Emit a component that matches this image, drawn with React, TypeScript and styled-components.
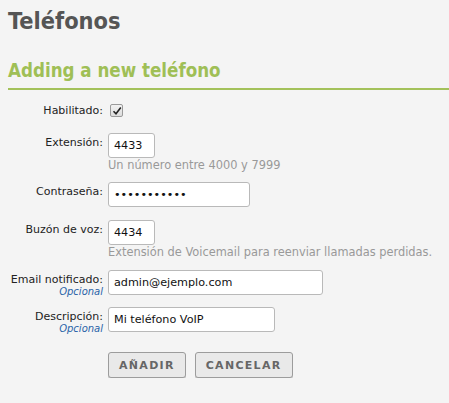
import styled, { createGlobalStyle } from 'styled-components';

const GlobalStyle = createGlobalStyle`
  html, body {
    margin: 0;
    padding: 0;
    background: #f4f4f4;
  }
  body {
    font-family: 'DejaVu Sans', Verdana, sans-serif;
    color: #222;
  }
`;

const Page = styled.div`
  padding: 7px 0 0 8px;
`;

const Title = styled.h1`
  margin: 0 0 25px;
  font-family: 'DejaVu Sans Condensed', 'DejaVu Sans', sans-serif;
  font-stretch: condensed;
  font-size: 23.4px;
  line-height: 28px;
  font-weight: bold;
  color: #555;
`;

const Subtitle = styled.h2`
  margin: 0 0 14px;
  padding-bottom: 6px;
  font-family: 'DejaVu Sans Condensed', 'DejaVu Sans', sans-serif;
  font-stretch: condensed;
  font-size: 18.6px;
  line-height: 22px;
  font-weight: bold;
  color: #9fbf56;
  border-bottom: 2px solid #a3c15a;
`;

const Form = styled.form`
  display: grid;
  grid-template-columns: 95px 1fr;
  column-gap: 5px;
  align-items: start;
`;

const Label = styled.label<{ $pad?: number }>`
  text-align: right;
  font-size: 11px;
  line-height: 13px;
  padding-top: ${(p) => p.$pad ?? 3}px;
  color: #222;
`;

const Optional = styled.span`
  display: block;
  font-style: italic;
  font-size: 10px;
  line-height: 12px;
  color: #2a63a8;
`;

const Field = styled.div<{ $gap?: number }>`
  display: flex;
  flex-direction: column;
  align-items: flex-start;
  margin-bottom: ${(p) => p.$gap ?? 12}px;
`;

const Input = styled.input<{ $w: number }>`
  box-sizing: border-box;
  width: ${(p) => p.$w}px;
  height: 25px;
  padding: 0 5px;
  border: 1px solid #b9b9b9;
  border-radius: 3px;
  background: #fff;
  font-family: 'DejaVu Sans', Verdana, sans-serif;
  font-size: 11.2px;
  color: #111;
  outline: none;
`;

const Hint = styled.div`
  margin-top: 1px;
  font-size: 11.4px;
  line-height: 13px;
  color: #999;
  white-space: nowrap;
`;

const CheckBox = styled.span`
  display: inline-flex;
  align-items: center;
  justify-content: center;
  width: 11px;
  height: 11px;
  margin-left: 2px;
  border: 1px solid #9a9a9a;
  border-radius: 2px;
  background: linear-gradient(#f2f2f2, #dcdcdc);
`;

const Buttons = styled.div`
  display: flex;
  gap: 9px;
  margin-top: 8px;
`;

const Button = styled.button`
  height: 26px;
  padding: 0 10px;
  border: 1px solid #9c9c9c;
  border-radius: 3px;
  background: #e9e9e9;
  box-shadow: 0 1px 0 #c8c8c8;
  font-family: 'DejaVu Sans', Verdana, sans-serif;
  font-size: 11px;
  font-weight: bold;
  letter-spacing: 1.3px;
  color: #666;
`;

function App() {
  return (
    <Page>
      <GlobalStyle />
      <Title>Teléfonos</Title>
      <Subtitle>Adding a new teléfono</Subtitle>
      <Form onSubmit={(e) => e.preventDefault()}>
        <Label $pad={0}>Habilitado:</Label>
        <Field $gap={16}>
          <CheckBox>
            <svg width="10" height="10" viewBox="0 0 10 10">
              <path d="M1.5 5.2 L4 7.8 L8.8 1.5" fill="none" stroke="#222" strokeWidth="1.6" />
            </svg>
          </CheckBox>
        </Field>

        <Label>Extensión:</Label>
        <Field $gap={10}>
          <Input $w={47} defaultValue="4433" />
          <Hint>Un número entre 4000 y 7999</Hint>
        </Field>

        <Label>Contraseña:</Label>
        <Field $gap={13}>
          <Input $w={142} type="password" defaultValue="12345678901" />
        </Field>

        <Label>Buzón de voz:</Label>
        <Field $gap={11}>
          <Input $w={47} defaultValue="4434" />
          <Hint>Extensión de Voicemail para reenviar llamadas perdidas.</Hint>
        </Field>

        <Label>
          Email notificado:
          <Optional>Opcional</Optional>
        </Label>
        <Field>
          <Input $w={215} defaultValue="admin@ejemplo.com" />
        </Field>

        <Label>
          Descripción:
          <Optional>Opcional</Optional>
        </Label>
        <Field>
          <Input $w={167} defaultValue="Mi teléfono VoIP" />
        </Field>

        <span />
        <Buttons>
          <Button type="submit">AÑADIR</Button>
          <Button type="button">CANCELAR</Button>
        </Buttons>
      </Form>
    </Page>
  );
}

export default App;
